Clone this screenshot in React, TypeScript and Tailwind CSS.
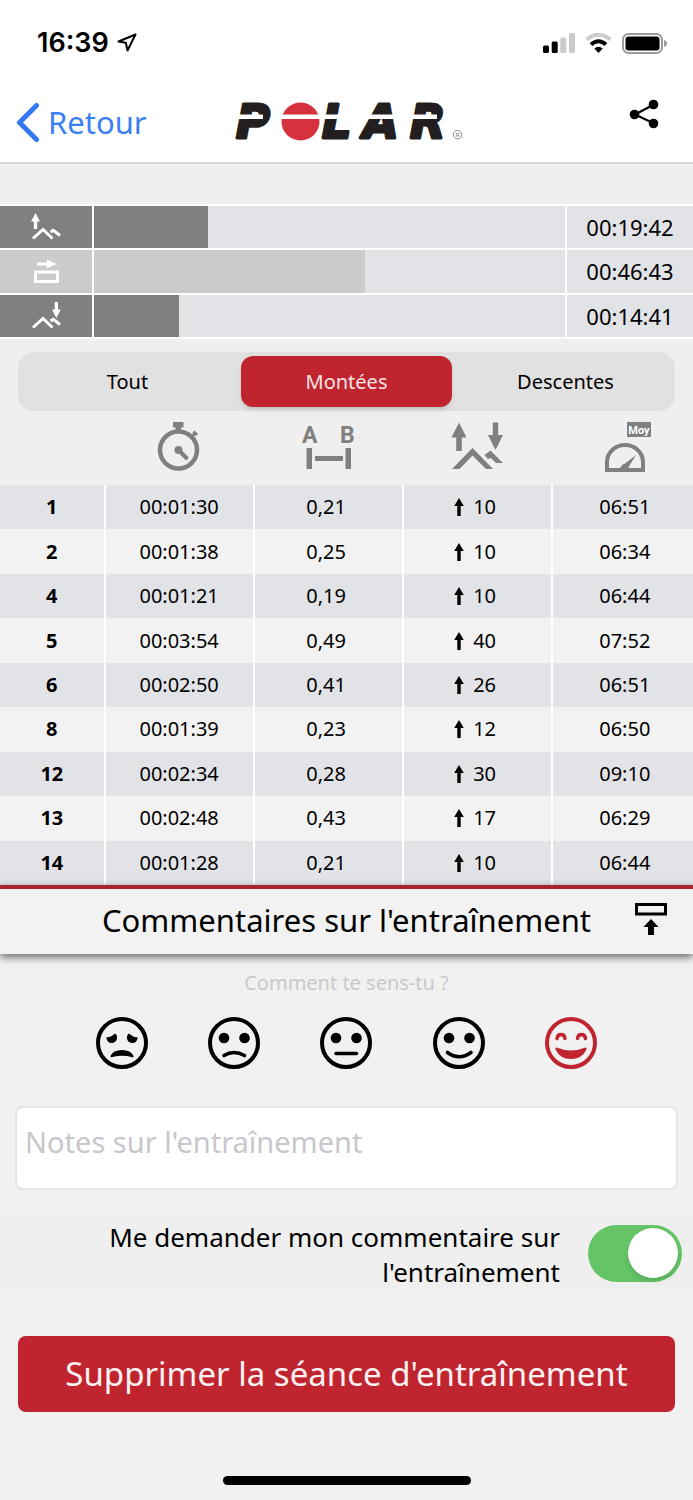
import { useState } from "react";
import type { ReactNode } from "react";

const zones = [
  { label: "Montées", time: "00:19:42", seconds: 1182, dark: true, icon: "up" },
  { label: "Plat", time: "00:46:43", seconds: 2803, dark: false, icon: "flat" },
  { label: "Descentes", time: "00:14:41", seconds: 881, dark: true, icon: "down" },
];

const totalSeconds = zones.reduce((sum, zone) => sum + zone.seconds, 0);

const tabs = ["Tout", "Montées", "Descentes"];

const laps = [
  { id: 1, time: "00:01:30", distance: "0,21", ascent: 10, pace: "06:51" },
  { id: 2, time: "00:01:38", distance: "0,25", ascent: 10, pace: "06:34" },
  { id: 4, time: "00:01:21", distance: "0,19", ascent: 10, pace: "06:44" },
  { id: 5, time: "00:03:54", distance: "0,49", ascent: 40, pace: "07:52" },
  { id: 6, time: "00:02:50", distance: "0,41", ascent: 26, pace: "06:51" },
  { id: 8, time: "00:01:39", distance: "0,23", ascent: 12, pace: "06:50" },
  { id: 12, time: "00:02:34", distance: "0,28", ascent: 30, pace: "09:10" },
  { id: 13, time: "00:02:48", distance: "0,43", ascent: 17, pace: "06:29" },
  { id: 14, time: "00:01:28", distance: "0,21", ascent: 10, pace: "06:44" },
];

const StatusBar = () => (
  <div className="flex h-[86px] items-center justify-between pl-[37px] pr-[26px]">
    <div className="flex items-center gap-2">
      <span className="font-['Inter',sans-serif] text-[27px] font-semibold">16:39</span>
      <svg width="20" height="20" viewBox="0 0 20 20" fill="none" stroke="black" strokeWidth="2" strokeLinejoin="round">
        <path d="M18.500 1.500 L1.500 8.500 L8.800 9.800 L10.500 17.500 Z" />
      </svg>
    </div>
    <div className="flex items-center gap-[10px]">
      <svg width="32" height="20" viewBox="0 0 32 20">
        <rect x="0" y="12.5" width="6" height="7.5" rx="1.5" />
        <rect x="8.7" y="8.5" width="6" height="11.5" rx="1.5" />
        <rect x="17.3" y="4.5" width="6" height="15.5" rx="1.5" fill="#cbcbcb" />
        <rect x="26" y="0" width="6" height="20" rx="1.5" fill="#cbcbcb" />
      </svg>
      <svg width="27" height="20" viewBox="0 0 27 20" fill="none" strokeWidth="4">
        <path d="M1.5 6.5 Q13.5 -3 25.5 6.5" stroke="#cbcbcb" />
        <path d="M6 11.5 Q13.5 5 21 11.5" stroke="black" />
        <path d="M9.3 15.5 Q13.5 12 17.7 15.5 L13.5 20 Z" fill="black" />
      </svg>
      <svg width="45" height="21" viewBox="0 0 45 21">
        <rect x="1" y="1" width="39" height="19" rx="5.5" fill="none" stroke="#9b9b9b" strokeWidth="2" />
        <rect x="3.5" y="3.5" width="34" height="14" rx="3" />
        <path d="M42 7 Q45 8 45 10.500 Q45 13 42 14 Z" fill="#9b9b9b" />
      </svg>
    </div>
  </div>
);

const Logo = () => (
  <svg width="232" height="64" viewBox="230 90 232 64" role="img" aria-label="Polar">
    <g
      fontFamily="'DejaVu Sans', sans-serif"
      fontSize="46"
      fontWeight="700"
      fontStyle="oblique"
      fill="#231f20"
      stroke="#231f20"
      strokeWidth="3"
      strokeLinejoin="round"
    >
      <text x="235" y="138">P</text>
      <text x="321" y="138">L</text>
      <text x="362" y="138">A</text>
      <text x="409" y="138">R</text>
    </g>
    <circle cx="299.500" cy="121.500" r="19" fill="#d5323e" />
    <rect x="232" y="114.500" width="30" height="4.500" fill="white" />
    <rect x="280" y="114.500" width="156" height="4.500" fill="white" />
    <circle cx="456.500" cy="134.700" r="4.200" fill="none" stroke="#8a8a8a" />
    <text x="454.500" y="137.200" fontFamily="'Liberation Sans', sans-serif" fontSize="6" fill="#777">R</text>
  </svg>
);

const NavBar = () => (
  <nav className="grid h-[78px] grid-cols-[1fr_auto_1fr] items-center border-b-2 border-[#d8d8d8] pb-1">
    <a href="#retour" className="flex items-center gap-2 pl-4 text-[31px] leading-10 text-[#3b7ff5]">
      <svg width="24" height="40" viewBox="0 0 24 40" fill="none" stroke="#3478f6" strokeWidth="5" strokeLinecap="round" strokeLinejoin="round">
        <path d="M20.500 3.500 L3.500 20.500 L20.500 37.500" />
      </svg>
      Retour
    </a>
    <Logo />
    <button type="button" aria-label="Partager" className="justify-self-end pb-4 pr-[34px]">
      <svg width="30" height="30" viewBox="0 0 30 30">
        <path d="M24 6 L6 15.500 L24 24" fill="none" stroke="black" strokeWidth="2.200" />
        <circle cx="24.500" cy="5.500" r="4.800" />
        <circle cx="5.500" cy="15.500" r="4.800" />
        <circle cx="24.500" cy="24.500" r="4.800" />
      </svg>
    </button>
  </nav>
);

const ZoneIcon = ({ type }: { type: string }) => {
  if (type === "flat") {
    return (
      <svg width="30" height="30" viewBox="0 0 30 30" fill="white">
        <path d="M6 6.500 H16 V3.500 L25.500 8 L16 12.500 V9.500 H6 Z" />
        <rect x="4.500" y="16" width="22" height="9.500" fill="none" stroke="white" strokeWidth="3" />
      </svg>
    );
  }
  return (
    <svg width="30" height="30" viewBox="0 0 30 30" fill="white">
      {type === "up" ? (
        <path d="M4.500 1 L9 9.500 H6.200 V17 H2.800 V9.500 H0 Z" />
      ) : (
        <path d="M23.700 1 H27 V8.500 H29.800 L25.400 17 L21 8.500 H23.700 Z" />
      )}
      <path d="M2 26.500 L12 17.500 L21.500 26.500 M19.500 20 L22.300 18.300 L29 23.500" fill="none" stroke="white" strokeWidth="3" />
    </svg>
  );
};

const ZoneBars = () => (
  <section className="border-y-2 border-white bg-white">
    <div className="grid h-[131px] grid-rows-3 gap-[2px]">
      {zones.map((zone) => (
        <div key={zone.label} className="grid grid-cols-[92px_1fr_126px] gap-[2px]">
          <div
            aria-label={zone.label}
            className={`flex items-center justify-center ${zone.dark ? "bg-[#808080]" : "bg-[#cbcbcb]"}`}
          >
            <ZoneIcon type={zone.icon} />
          </div>
          <div className="bg-[#e2e3e7]">
            <div
              className={`h-full ${zone.dark ? "bg-[#808080]" : "bg-[#cbcbcb]"}`}
              style={{ width: `${(zone.seconds / totalSeconds) * 100}%` }}
            />
          </div>
          <div className="flex items-center justify-center bg-[#e2e3e7] text-[22px] leading-8">{zone.time}</div>
        </div>
      ))}
    </div>
  </section>
);

const Tabs = () => {
  const [active, setActive] = useState("Montées");

  return (
    <div className="mx-[18px] mt-[13px] grid grid-cols-3 gap-2 rounded-2xl bg-[#e1e1e1] p-1">
      {tabs.map((tab) => (
        <button
          key={tab}
          type="button"
          onClick={() => setActive(tab)}
          className={`h-[51px] rounded-xl text-[20px] ${
            tab === active ? "bg-[#c0252f] text-[#fbe4e5] shadow-md" : ""
          }`}
        >
          {tab}
        </button>
      ))}
    </div>
  );
};

const HeadIcon = ({ label, viewBox, children }: { label: string; viewBox: string; children: ReactNode }) => (
  <svg width="54" height="54" viewBox={viewBox} role="img" aria-label={label} className="mx-auto" fill="#808080">
    {children}
  </svg>
);

const LapTable = () => (
  <table className="h-[474px] w-full table-fixed border-collapse text-center text-[20px] leading-7">
    <thead>
      <tr className="h-[74px]">
        <th className="w-[15.1%]" aria-label="Tour" />
        <th className="w-[21.5%]">
          <HeadIcon label="Durée" viewBox="153 421 54 54">
            <circle cx="179.500" cy="450" r="18.500" fill="none" stroke="#808080" strokeWidth="4.500" />
            <path d="M174 422 H184.500 V427.500 H182 V431 H176.500 V427.500 H174 Z" />
            <path d="M191.500 438 L196 433.500 M194.500 431.500 L198 435" fill="none" stroke="#808080" strokeWidth="3" />
            <circle cx="179.500" cy="450" r="4" />
            <path d="M180 450.500 L188.500 459" stroke="#808080" strokeWidth="4" />
          </HeadIcon>
        </th>
        <th className="w-[21.5%]">
          <HeadIcon label="Distance" viewBox="301 421 54 54">
            <g fontFamily="'Liberation Sans Narrow', Roboto, sans-serif" fontSize="23" fontWeight="700">
              <text x="302" y="443">A</text>
              <text x="340" y="443">B</text>
            </g>
            <rect x="306.500" y="448" width="5.500" height="21" />
            <rect x="315" y="456" width="28" height="5" />
            <rect x="345.500" y="448" width="5.500" height="21" />
          </HeadIcon>
        </th>
        <th className="w-[21.5%]">
          <HeadIcon label="Dénivelé" viewBox="450 421 54 54">
            <path d="M459 422.500 L466.500 437.500 H461.800 V451 H456.200 V437.500 H451.500 Z" />
            <path d="M492.800 422.500 H498.200 V435 H503 L495.500 450 L488 435 H492.800 Z" />
            <path d="M452 469 L472.500 448 L493 469 H486 L472.500 455.500 L459.500 469 Z" />
            <path d="M484.500 455 L490.500 450.500 L503 463 H496 L491 458 L488 459 Z" />
          </HeadIcon>
        </th>
        <th className="pl-1">
          <HeadIcon label="Allure moyenne" viewBox="598 421 54 54">
            <path d="M608 470 V462 A18 17 0 0 1 644 462 V470 Z" fill="none" stroke="#808080" strokeWidth="4" />
            <path d="M637 455 L630.500 465.500 L629 470 H621 Q621 465 626 463.500 Z" />
            <rect x="628" y="422" width="24" height="15" />
            <text x="640" y="433.500" textAnchor="middle" fontFamily="Roboto, sans-serif" fontSize="11" fontWeight="700" fill="white">
              Moy
            </text>
          </HeadIcon>
        </th>
      </tr>
    </thead>
    <tbody>
      {laps.map((lap) => (
        <tr key={lap.id} className="odd:bg-[#e2e3e7] even:bg-[#f2f2f2]">
          <th scope="row" className="border-r-2 border-white font-bold">{lap.id}</th>
          <td className="border-r-2 border-white">{lap.time}</td>
          <td className="border-r-2 border-white pr-1">{lap.distance}</td>
          <td className="border-r-2 border-white">
            <div className="flex items-center justify-center gap-[9px] pr-1">
              <svg width="10" height="18" viewBox="0 0 10 18">
                <path d="M5 0 L9.800 8 H6.700 V18 H3.300 V8 H0.200 Z" />
              </svg>
              {lap.ascent}
            </div>
          </td>
          <td className="pl-1">{lap.pace}</td>
        </tr>
      ))}
    </tbody>
  </table>
);

const roundEyes = (
  <>
    <circle cx="16" cy="21" r="5.300" />
    <circle cx="36.500" cy="21" r="5.300" />
  </>
);

const moods: { name: string; face: ReactNode }[] = [
  {
    name: "Très mal",
    face: (
      <>
        <path d="M10.500 20 Q14 21 19 16.500 Q21.500 18 21 21.500 A5.300 5.300 0 0 1 10.500 20 Z" />
        <path d="M41.500 20 Q38 21 33 16.500 Q30.500 18 31 21.500 A5.300 5.300 0 0 0 41.500 20 Z" />
        <path d="M14.500 39 Q17 33 26 33 Q35 33 37.500 39 Q38 41 35.500 40 Q26 37.500 16.500 40 Q14 41 14.500 39 Z" />
      </>
    ),
  },
  {
    name: "Mal",
    face: (
      <>
        {roundEyes}
        <path d="M16 38.500 Q26 32.500 36.500 38.500" fill="none" stroke="currentColor" strokeWidth="3.600" strokeLinecap="round" />
      </>
    ),
  },
  {
    name: "Moyen",
    face: (
      <>
        {roundEyes}
        <path d="M16 36.500 H36.500" fill="none" stroke="currentColor" strokeWidth="3.600" strokeLinecap="round" />
      </>
    ),
  },
  {
    name: "Bien",
    face: (
      <>
        {roundEyes}
        <path d="M14.500 35.500 Q26 44 38 35.500" fill="none" stroke="currentColor" strokeWidth="3.600" strokeLinecap="round" />
      </>
    ),
  },
  {
    name: "Très bien",
    face: (
      <>
        <path d="M12 21.500 Q12.500 17.500 16 17.500 Q19.500 17.500 20 21.500 M32.500 21.500 Q33 17.500 36.500 17.500 Q40 17.500 40.500 21.500" fill="none" stroke="currentColor" strokeWidth="3.400" strokeLinecap="round" />
        <path d="M11.500 30.500 Q26 36.500 40.500 30.500 Q42 30.500 41.500 32.500 Q37 42 26 42 Q15 42 10.500 32.500 Q10 30.500 11.500 30.500 Z" />
      </>
    ),
  },
];

const MoodPicker = () => {
  const [mood, setMood] = useState("Très bien");

  return (
    <fieldset>
      <legend className="mx-auto pt-[15px] text-[20px] leading-7 text-[#c9c9cc]">Comment te sens-tu ?</legend>
      <div className="mx-[66px] mt-5 grid grid-cols-5">
        {moods.map(({ name, face }) => (
          <label
            key={name}
            className={`relative flex cursor-pointer justify-center ${name === mood ? "text-[#c0252f]" : "text-black"}`}
          >
            <input
              type="radio"
              name="mood"
              aria-label={name}
              checked={name === mood}
              onChange={() => setMood(name)}
              className="sr-only"
            />
            <svg width="52" height="52" viewBox="0 0 52 52" fill="currentColor">
              <circle cx="26" cy="26" r="24" fill="none" stroke="currentColor" strokeWidth="4" />
              {face}
            </svg>
          </label>
        ))}
      </div>
    </fieldset>
  );
};

export default function App() {
  const [ask, setAsk] = useState(true);

  return (
    <div className="min-h-screen bg-[#f1f1f1] font-['Noto_Sans',sans-serif] text-black">
      <header className="bg-white">
        <StatusBar />
        <NavBar />
      </header>

      <main>
        <div className="bg-[#efefef] pt-10">
          <ZoneBars />
          <Tabs />
          <LapTable />
        </div>

        <div className="relative flex h-[69px] items-center justify-center border-t-4 border-[#ab242c] bg-[#f2f2f2] pb-1 shadow-[0_3px_8px_rgba(0,0,0,0.6)]">
          <h2 className="text-[31px] leading-10">Commentaires sur l'entraînement</h2>
          <button type="button" aria-label="Replier les commentaires" className="absolute right-[26px] top-[14px]">
            <svg width="32" height="32" viewBox="0 0 32 32">
              <rect x="1.500" y="1.500" width="29" height="9.500" fill="none" stroke="black" strokeWidth="3" />
              <path d="M16 16 L23.500 24 H19 V32 H13 V24 H8.500 Z" />
            </svg>
          </button>
        </div>

        <MoodPicker />

        <div className="px-[15px] pt-[37px]">
          <textarea
            aria-label="Notes sur l'entraînement"
            placeholder="Notes sur l'entraînement"
            className="block h-[84px] w-full resize-none rounded-lg border-2 border-[#e6e6e6] bg-white px-2 py-[14px] text-[29px] leading-10 placeholder:text-[#c7c7cc]"
          />
        </div>

        <div className="mt-[26px] flex items-center justify-end gap-7 bg-[#efefef] pr-[11px]">
          <label htmlFor="ask" className="max-w-[460px] pt-1 text-right text-[26px] leading-[35px]">
            Me demander mon commentaire sur l'entraînement
          </label>
          <input
            id="ask"
            type="checkbox"
            role="switch"
            checked={ask}
            onChange={(e) => setAsk(e.target.checked)}
            className="flex h-[57px] w-[94px] cursor-pointer appearance-none items-center rounded-full bg-[#d5d5d5] px-1 before:h-[50px] before:w-[50px] before:rounded-full before:bg-white before:shadow-md checked:justify-end checked:bg-[#64c466]"
          />
        </div>

        <div className="px-[18px] pt-[46px]">
          <button type="button" className="h-[76px] w-full rounded-lg bg-[#c0252f] text-[33px] text-[#fdf1f1]">
            Supprimer la séance d'entraînement
          </button>
        </div>
      </main>

      <div className="mx-auto mt-16 h-[9px] w-[248px] rounded-full bg-black" />
    </div>
  );
}
